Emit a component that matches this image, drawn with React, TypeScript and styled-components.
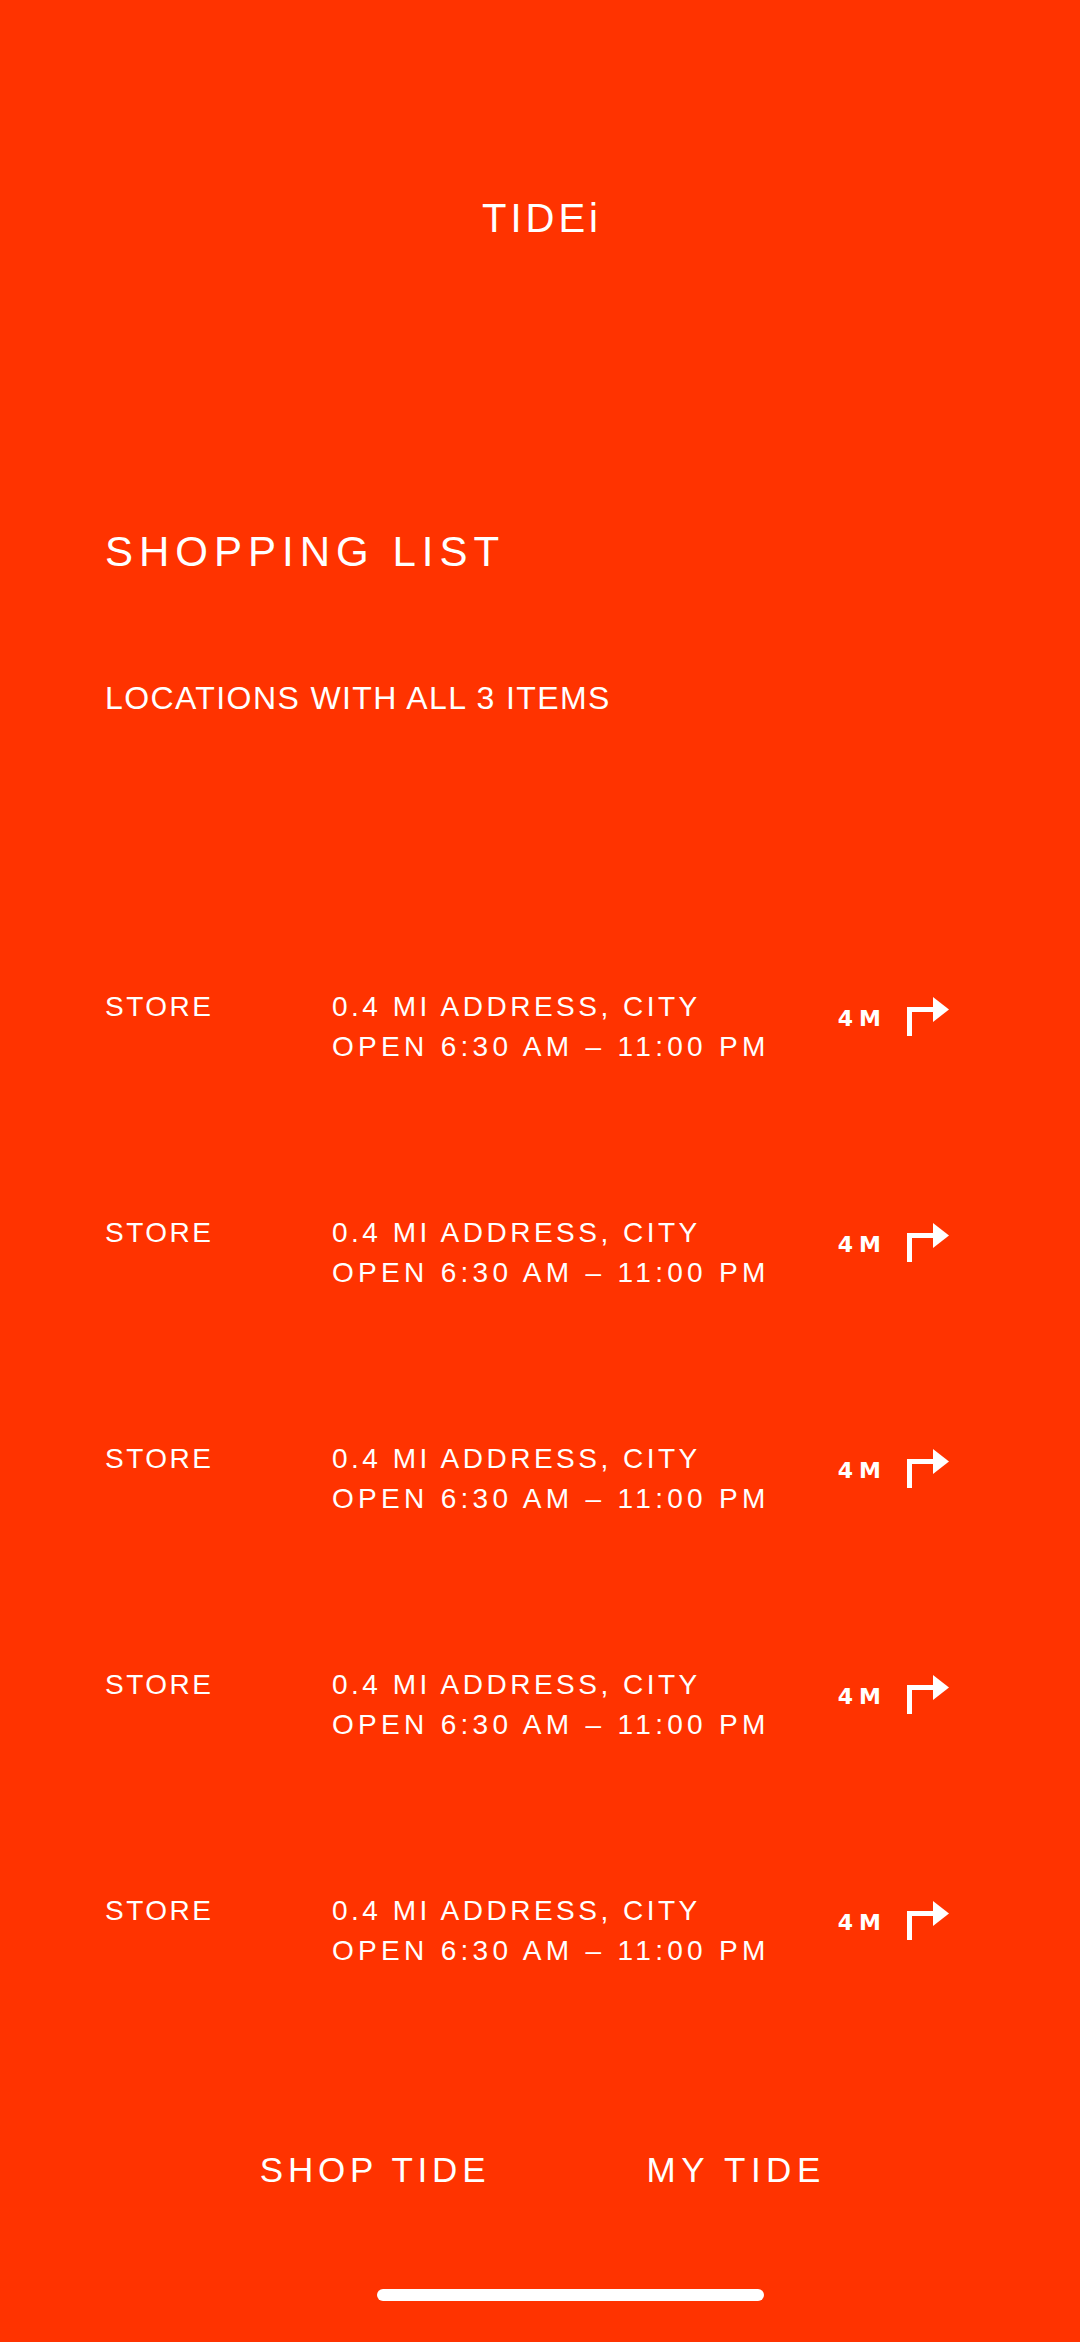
import React from 'react';
import styled, { createGlobalStyle } from 'styled-components';

const GlobalStyle = createGlobalStyle`
	html, body {
		margin: 0;
		padding: 0;
		background: #ff3300;
	}
	body {
		font-family: 'Liberation Sans', Arial, sans-serif;
		color: #ffffff;
	}
`;

const stores = [
	{ name: 'STORE', address: '0.4 MI ADDRESS, CITY', hours: 'OPEN 6:30 AM – 11:00 PM', eta: '4M' },
	{ name: 'STORE', address: '0.4 MI ADDRESS, CITY', hours: 'OPEN 6:30 AM – 11:00 PM', eta: '4M' },
	{ name: 'STORE', address: '0.4 MI ADDRESS, CITY', hours: 'OPEN 6:30 AM – 11:00 PM', eta: '4M' },
	{ name: 'STORE', address: '0.4 MI ADDRESS, CITY', hours: 'OPEN 6:30 AM – 11:00 PM', eta: '4M' },
	{ name: 'STORE', address: '0.4 MI ADDRESS, CITY', hours: 'OPEN 6:30 AM – 11:00 PM', eta: '4M' },
];

const TurnIcon = () => (
	<svg width='42' height='39' viewBox='0 0 42 39' fill='#ffffff'>
		<rect x='0' y='10' width='5' height='29' />
		<rect x='0' y='10' width='28' height='5' />
		<polygon points='26,0 42,12.5 26,25' />
	</svg>
);

const App = () => {
	return (
		<>
			<GlobalStyle />
			<Screen>
				<Logo>TIDEi</Logo>

				<Content>
					<Title>SHOPPING LIST</Title>
					<Subtitle>LOCATIONS WITH ALL 3 ITEMS</Subtitle>

					<StoreList>
						{stores.map((s, i) => (
							<StoreRow key={i}>
								<StoreName>{s.name}</StoreName>
								<StoreInfo>
									<InfoLine spacing={3.5}>{s.address}</InfoLine>
									<InfoLine spacing={4.3}>{s.hours}</InfoLine>
								</StoreInfo>
								<Directions>
									<Eta>{s.eta}</Eta>
									<TurnIcon />
								</Directions>
							</StoreRow>
						))}
					</StoreList>
				</Content>

				<TabBar>
					<Tab spacing={4.8}>SHOP TIDE</Tab>
					<Tab spacing={5.5}>MY TIDE</Tab>
				</TabBar>

				<HomeBar>
					<Indicator />
				</HomeBar>
			</Screen>
		</>
	);
};

const Screen = styled.div`
	width: 1080px;
	min-height: 2342px;
	background: #ff3300;
	display: flex;
	flex-direction: column;
	padding-top: 198px;
	box-sizing: border-box;
`;

const Logo = styled.div`
	font-size: 40px;
	line-height: 1;
	letter-spacing: 4px;
	text-align: center;
	margin-right: -4px;
`;

const Content = styled.div`
	padding: 0 131px 0 105px;
	display: flex;
	flex-direction: column;
`;

const Title = styled.h1`
	margin: 293px 0 0;
	font-size: 42px;
	font-weight: 400;
	line-height: 1;
	letter-spacing: 6px;
`;

const Subtitle = styled.h2`
	margin: 109px 0 0;
	font-size: 32px;
	font-weight: 400;
	line-height: 1;
	letter-spacing: 1.4px;
`;

const StoreList = styled.div`
	margin-top: 273px;
	display: flex;
	flex-direction: column;
	gap: 146px;
`;

const StoreRow = styled.div`
	display: grid;
	grid-template-columns: 227px 1fr auto;
	align-items: start;
	font-size: 28px;
	line-height: 40px;
`;

const StoreName = styled.div`
	letter-spacing: 2.5px;
`;

const StoreInfo = styled.div`
	display: flex;
	flex-direction: column;
`;

const InfoLine = styled.span<{ spacing: number }>`
	letter-spacing: ${(p) => p.spacing}px;
	white-space: nowrap;
`;

const Directions = styled.div`
	display: flex;
	align-items: flex-start;
	gap: 20px;
	margin-top: 10px;
`;

const Eta = styled.span`
	font-family: 'DejaVu Sans', sans-serif;
	font-weight: 700;
	font-size: 22px;
	line-height: 1;
	letter-spacing: 6px;
	margin-top: 11px;
`;

const TabBar = styled.nav`
	margin-top: 181px;
	display: flex;
	justify-content: center;
	gap: 161px;
`;

const Tab = styled.div<{ spacing: number }>`
	font-size: 35px;
	line-height: 1;
	letter-spacing: ${(p) => p.spacing}px;
	margin-right: -${(p) => p.spacing}px;
`;

const HomeBar = styled.div`
	margin-top: 102px;
	display: flex;
	justify-content: center;
	padding-left: 61px;
`;

const Indicator = styled.div`
	width: 387px;
	height: 12px;
	border-radius: 6px;
	background: #ffffff;
`;

export default App;
